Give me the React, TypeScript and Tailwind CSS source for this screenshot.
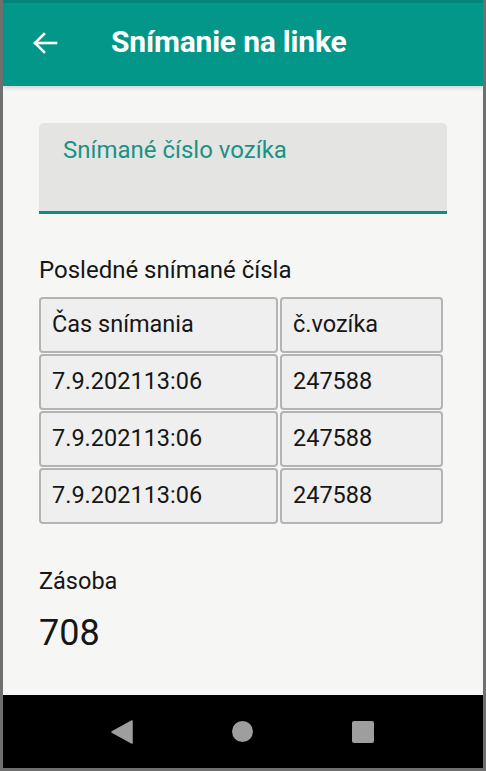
import React from "react";

const rows = [
  { time: "7.9.202113:06", cart: "247588" },
  { time: "7.9.202113:06", cart: "247588" },
  { time: "7.9.202113:06", cart: "247588" },
];

function Cell({ children, wide }: { children: React.ReactNode; wide?: boolean }) {
  return (
    <div
      className={`${
        wide ? "w-[239px]" : "w-[163px]"
      } h-[56px] flex items-center pl-[11px] border-2 border-[#b4b4b4] rounded-[4px] bg-[#efefef] text-[23.5px] text-[#161616]`}
    >
      {children}
    </div>
  );
}

export default function App() {
  return (
    <div
      className="w-[486px] h-[771px] flex flex-col border-x-[3px] border-b-[3px] border-[#6f6f6f] overflow-hidden"
      style={{ fontFamily: "Roboto, 'Noto Sans', sans-serif" }}
    >
      {/* app bar */}
      <div className="h-[86px] flex-none bg-[#03978a] border-t-[3px] border-[#04857a] flex items-center shadow-[0_2px_4px_rgba(0,0,0,0.15)] relative z-10">
        <svg width="26" height="22" viewBox="0 0 26 22" className="ml-[29px] -mt-[4px]" fill="none" stroke="#fff" strokeWidth="2.6" strokeLinecap="square">
          <path d="M3 11H24" />
          <path d="M12 2L3 11L12 20" />
        </svg>
        <h1 className="ml-[53px] -mt-[6px] text-white text-[30px] leading-[36px] font-bold tracking-[-0.2px]">Snímanie na linke</h1>
      </div>

      {/* content */}
      <div className="flex-1 bg-[#f6f6f4] px-[36px] pt-[37px]">
        <div className="h-[91px] bg-[#e4e4e2] rounded-t-[5px] border-b-[3px] border-[#0b8f83] pl-[24px] pt-[13px]">
          <span className="text-[24px] text-[#1b9286] leading-[28px]">Snímané číslo vozíka</span>
        </div>

        <p className="mt-[42px] text-[24px] leading-[28px] text-[#161616]">Posledné snímané čísla</p>

        <div className="mt-[13px] flex flex-col gap-[1px] w-[404px]">
          <div className="flex gap-[2px]">
            <Cell wide>Čas snímania</Cell>
            <Cell>č.vozíka</Cell>
          </div>
          {rows.map((r, i) => (
            <div key={i} className="flex gap-[2px]">
              <Cell wide>{r.time}</Cell>
              <Cell>{r.cart}</Cell>
            </div>
          ))}
        </div>

        <p className="mt-[43px] text-[23.5px] leading-[28px] text-[#161616]">Zásoba</p>
        <p className="mt-[17px] text-[36px] leading-[42px] text-[#161616]">708</p>
      </div>

      {/* nav bar */}
      <div className="h-[73px] flex-none bg-black flex items-center">
        <svg width="22" height="24" viewBox="0 0 22 24" className="ml-[108px]">
          <path d="M21 1V23L1 12Z" fill="#9e9e9e" stroke="#9e9e9e" strokeWidth="1.5" strokeLinejoin="round" />
        </svg>
        <div className="ml-[99px] w-[21px] h-[21px] rounded-full bg-[#9e9e9e]" />
        <div className="ml-[99px] w-[22px] h-[22px] rounded-[2px] bg-[#9e9e9e]" />
      </div>
    </div>
  );
}
